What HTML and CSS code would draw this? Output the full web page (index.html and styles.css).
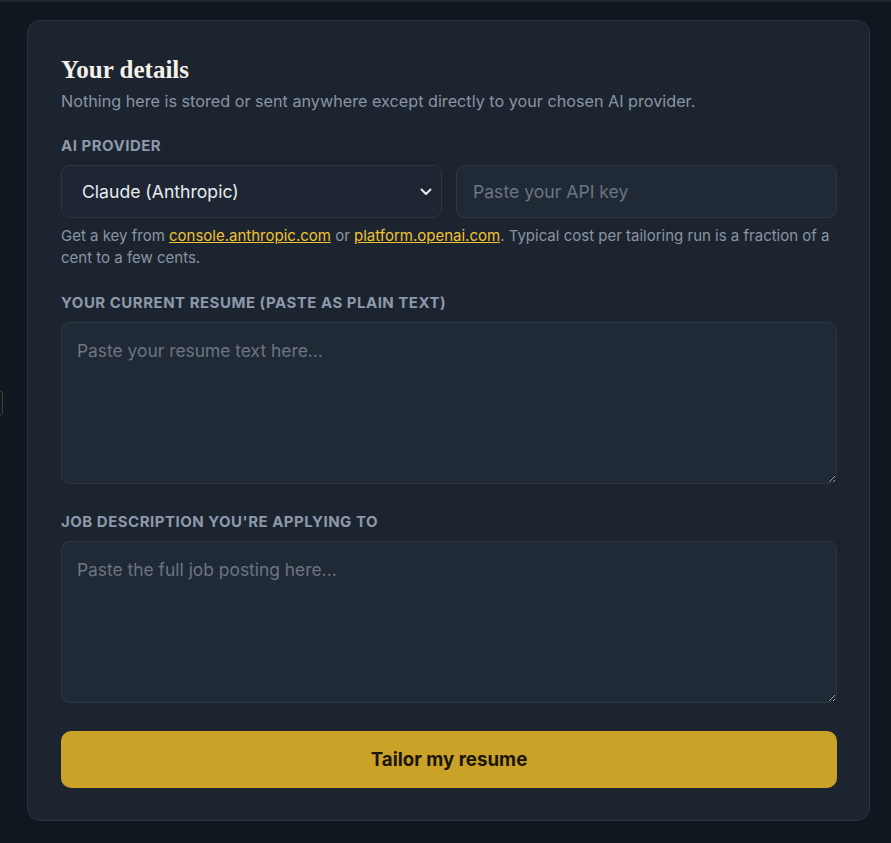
FILE: index.html
```html
<!DOCTYPE html>
<html lang="en">
<head>
<meta charset="utf-8">
<title>Your details</title>
<link rel="stylesheet" href="styles.css">
</head>
<body>
<div class="topline"></div>
<div class="edge-tab"></div>
<main class="page">
  <section class="card">
    <h2 class="title">Your details</h2>
    <p class="subtitle">Nothing here is stored or sent anywhere except directly to your chosen AI provider.</p>

    <div class="group">
      <label class="label">AI Provider</label>
      <div class="row">
        <div class="select-wrap">
          <select class="control select">
            <option>Claude (Anthropic)</option>
            <option>GPT (OpenAI)</option>
          </select>
          <svg class="chevron" width="12" height="8" viewBox="0 0 12 8"><path d="M1.5 1.5 L6 6 L10.5 1.5" fill="none" stroke="#e6ebf0" stroke-width="2" stroke-linecap="round" stroke-linejoin="round"/></svg>
        </div>
        <input class="control input" type="password" placeholder="Paste your API key">
      </div>
      <p class="help">Get a key from <a href="#">console.anthropic.com</a> or <a href="#">platform.openai.com</a>. Typical cost per tailoring run is a fraction of a cent to a few cents.</p>
    </div>

    <div class="group group-mid">
      <label class="label">Your current resume (paste as plain text)</label>
      <textarea class="control area" placeholder="Paste your resume text here..."></textarea>
    </div>

    <div class="group group-wide">
      <label class="label">Job description you're applying to</label>
      <textarea class="control area" placeholder="Paste the full job posting here..."></textarea>
    </div>

    <button class="submit">Tailor my resume</button>
  </section>
</main>
</body>
</html>
```

FILE: styles.css
```css
html, body {
  margin: 0;
  padding: 0;
  background: #10171f;
  font-family: Inter, "Noto Sans", sans-serif;
  color: #e6ebf0;
}

.topline {
  height: 2px;
  background: #1f262e;
}

.edge-tab {
  position: absolute;
  left: -10px;
  top: 390px;
  width: 11px;
  height: 24px;
  border: 1px solid #4a4030;
  border-radius: 4px;
}

.page {
  padding: 18px 21px 20px 27px;
}

.card {
  background: #1c2430;
  border: 1px solid #2b3440;
  border-radius: 13px;
  padding: 35px 32px 32px 33px;
}

.title {
  margin: 0;
  font-family: "Liberation Serif", "DejaVu Serif", serif;
  font-weight: 700;
  font-size: 25px;
  line-height: 28px;
  color: #f4f1ea;
}

.subtitle {
  margin: 7px 0 0;
  font-size: 16.2px;
  line-height: 20px;
  color: #8a95a4;
}

.group {
  margin-top: 25px;
}

.group-mid {
  margin-top: 24px;
}

.group-wide {
  margin-top: 28px;
}

.label {
  display: block;
  font-size: 15px;
  font-weight: 700;
  line-height: 19px;
  letter-spacing: 0.5px;
  text-transform: uppercase;
  color: #8d99aa;
  margin-bottom: 10px;
}

.row {
  display: grid;
  grid-template-columns: 1fr 1fr;
  gap: 14px;
}

.select-wrap {
  position: relative;
  min-width: 0;
}

.control {
  box-sizing: border-box;
  width: 100%;
  background: #202936;
  border: 1px solid #2d3745;
  border-radius: 9px;
  color: #e8ecf0;
  font-family: Inter, "Noto Sans", sans-serif;
  outline: none;
}

.select {
  display: block;
  appearance: none;
  -webkit-appearance: none;
  height: 53px;
  font-size: 17.6px;
  padding: 0 40px 0 20px;
  background: #1d2632;
}

.chevron {
  position: absolute;
  right: 10px;
  top: 23px;
}

.input {
  display: block;
  min-width: 0;
  height: 53px;
  font-size: 17.6px;
  padding: 0 16px;
}

.input::placeholder,
.area::placeholder {
  color: #6c7581;
}

.help {
  margin: 7px 0 0;
  font-size: 15px;
  line-height: 22px;
  color: #8a95a4;
}

.help a {
  color: #f1c232;
  text-decoration: underline;
}

.area {
  display: block;
  height: 162px;
  font-size: 17.4px;
  line-height: 24px;
  padding: 16px 15px;
  resize: vertical;
}

.submit {
  display: block;
  width: 100%;
  margin-top: 28px;
  height: 57px;
  border: none;
  border-radius: 10px;
  background: #c9a227;
  color: #1a1506;
  font-family: Inter, "Noto Sans", sans-serif;
  font-size: 18.7px;
  font-weight: 700;
  cursor: pointer;
}
```
